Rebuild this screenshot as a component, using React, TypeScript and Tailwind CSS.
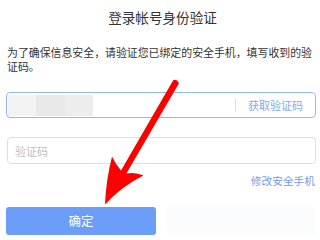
// Phone verification dialog with a red annotation arrow pointing at the confirm button.

const font = { fontFamily: '"Noto Sans CJK SC", "Noto Sans", sans-serif' };

function RedArrow() {
  return (
    <svg
      className="pointer-events-none absolute left-0 top-0"
      width="320"
      height="240"
      viewBox="0 0 320 240"
    >
      <path
        d="M173.2,80.2 Q176.5,78.5 179,83.2 L126.4,173.6 Q135,171.5 143.5,175.5 Q122,186 105,204.5 Q106,180 112,156.5 Q116,165 121,170.6 Z"
        fill="#ff0000"
      />
    </svg>
  );
}

export default function App() {
  return (
    <div className="relative h-[240px] w-[320px] overflow-hidden bg-white text-[#333]" style={font}>
      <h1 className="mt-[9px] pl-[5px] text-center text-[13.6px] font-normal leading-[17px] text-[#333]">
        登录帐号身份验证
      </h1>

      <p className="mt-[19px] pl-[7px] text-[10.9px] leading-[14px] text-[#333]">
        为了确保信息安全，请验证您已绑定的安全手机，填写收到的验证码。
      </p>

      <div className="ml-[6px] mt-[19px] flex h-[26px] w-[310px] items-center rounded-[4px] border border-[#93b6f6] bg-white">
        <div className="ml-[1px] flex h-[21px]">
          <div className="w-[28px] bg-[#f3f3f3]" />
          <div className="w-[29px] bg-[#e9e9e9]" />
          <div className="w-[28px] bg-[#ededed]" />
        </div>
        <div className="ml-auto h-[13px] w-px bg-[#dcdcdc]" />
        <span className="ml-[12px] mr-[12px] text-[11px] leading-[14px] text-[#82a9ee]">获取验证码</span>
      </div>

      <div className="ml-[7px] mt-[19px] flex h-[27px] w-[309px] items-center rounded-[4px] border border-[#dedede] bg-white pl-[7px]">
        <span className="text-[11px] leading-[14px] text-[#c0c0c0]">验证码</span>
      </div>

      <div className="mt-[10px] flex justify-end pr-[5px]">
        <span className="text-[10.7px] leading-[14px] text-[#6f9ded]">修改安全手机</span>
      </div>

      <div className="ml-[6px] mt-[19px] flex items-center gap-[11px]">
        <button className="flex h-[28px] w-[150px] items-center justify-center rounded-[3px] bg-[#6c9ef9] text-[12.5px] text-white">
          确定
        </button>
        <div className="h-[28px] w-[149px] rounded-[3px] bg-[#fbfcfe]" />
      </div>

      <RedArrow />
    </div>
  );
}
